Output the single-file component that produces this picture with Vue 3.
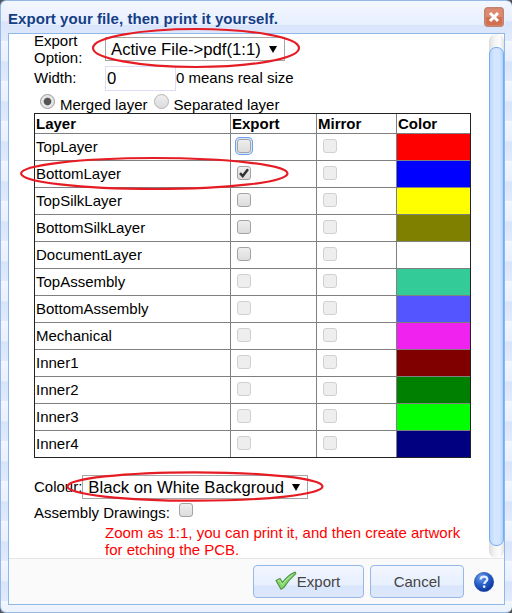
<script setup>
const layers = [
  { name: 'TopLayer', color: '#ff0000', enabled: true, focused: true },
  { name: 'BottomLayer', color: '#0000ff', enabled: true, checked: true },
  { name: 'TopSilkLayer', color: '#ffff00', enabled: true },
  { name: 'BottomSilkLayer', color: '#808000', enabled: true },
  { name: 'DocumentLayer', color: '#ffffff', enabled: true },
  { name: 'TopAssembly', color: '#33cc99' },
  { name: 'BottomAssembly', color: '#5555ff' },
  { name: 'Mechanical', color: '#f022f0' },
  { name: 'Inner1', color: '#800000' },
  { name: 'Inner2', color: '#008000' },
  { name: 'Inner3', color: '#00ff00' },
  { name: 'Inner4', color: '#000080' },
]
</script>

<template>
  <div class="backdrop">
    <div class="window">
      <header class="title-bar">
        <span class="title">Export your file, then print it yourself.</span>
        <span class="close">
          <svg width="20" height="20" viewBox="0 0 20 20">
            <rect x="0.7" y="0.7" width="18.6" height="18.6" rx="3" fill="#dc8a70" stroke="#c08271" stroke-width="1.4" />
            <path d="M2 10h16v6q0 2-2 2H4q-2 0-2-2z" fill="#d07050" />
            <path d="M6 6l8 8M14 6l-8 8" stroke="#fff" stroke-width="3" />
          </svg>
        </span>
      </header>
      <div class="panel">
        <div class="body">
          <div class="form">
            <div class="row option">
              <label class="lbl">Export<br />Option:</label>
              <div class="select file"><span>Active File-&gt;pdf(1:1)</span><i class="arrow"></i></div>
            </div>
            <div class="row width">
              <label class="lbl">Width:</label>
              <div class="input">0</div>
              <span>0 means real size</span>
            </div>
            <div class="row radios">
              <i class="radio on"></i><span class="merged">Merged layer</span>
              <i class="radio"></i><span>Separated layer</span>
            </div>
            <div class="table">
              <div class="tr head">
                <div class="td">Layer</div>
                <div class="td">Export</div>
                <div class="td">Mirror</div>
                <div class="td">Color</div>
              </div>
              <div v-for="l in layers" :key="l.name" class="tr">
                <div class="td">{{ l.name }}</div>
                <div class="td">
                  <i class="check" :class="{ off: !l.enabled, focused: l.focused }">
                    <svg v-if="l.checked" width="12" height="12" viewBox="0 0 12 12">
                      <path d="M2 6.2l2.7 2.9L10 2.3" fill="none" stroke="#333" stroke-width="2.5" />
                    </svg>
                  </i>
                </div>
                <div class="td"><i class="check off"></i></div>
                <div class="td" :style="{ background: l.color }"></div>
              </div>
            </div>
            <div class="row colour">
              <label>Colour:</label>
              <div class="select bg"><span>Black on White Backgroud</span><i class="arrow"></i></div>
            </div>
            <div class="row assembly">
              <label>Assembly Drawings:</label><i class="check"></i>
            </div>
            <p class="note">Zoom as 1:1, you can print it, and then create artwork<br />for etching the PCB.</p>
          </div>
          <div class="track"><div class="thumb"></div></div>
        </div>
        <footer class="footer">
          <div class="btn export">
            <svg width="22" height="20" viewBox="0 0 22 20">
              <path d="M1 9.500l4-2 2.500 4Q12.500 4.500 20 1l.8 1.600Q13.500 9 8.800 16.600L6 18.200z" fill="#82d96b" stroke="#55944c" stroke-width="1.200" stroke-linejoin="round" />
              <path d="M2.800 10l1.700-.8 2.700 4.300Q12 7.200 17.500 3.700" fill="none" stroke="#b3f09c" stroke-width="1" />
            </svg>
            <span>Export</span>
          </div>
          <div class="btn cancel">Cancel</div>
          <svg class="help" width="20" height="20" viewBox="0 0 20 20">
            <defs>
              <radialGradient id="orb" cx=".35" cy=".25" r=".8">
                <stop offset="0" stop-color="#6f9eec" />
                <stop offset=".5" stop-color="#2860ca" />
                <stop offset="1" stop-color="#0b3299" />
              </radialGradient>
            </defs>
            <circle cx="10" cy="10" r="9.6" fill="url(#orb)" stroke="#1946a6" stroke-width=".7" />
            <path d="M6.600 7.500Q6.700 4.600 10 4.600q3.300 0 3.300 2.700c0 2.100-3 2.100-3 4.800" fill="none" stroke="#e6efff" stroke-width="2.200" />
            <circle cx="10.200" cy="14.700" r="1.350" fill="#e6efff" />
          </svg>
        </footer>
      </div>
      <svg class="marks" width="512" height="613" viewBox="0 0 512 613">
        <g fill="none" stroke="#e61c24" stroke-width="2.200">
          <ellipse cx="196" cy="48" rx="103" ry="19" />
          <ellipse cx="154.300" cy="173.500" rx="133.200" ry="15.500" />
          <ellipse cx="195" cy="486.500" rx="127.500" ry="14.200" />
        </g>
      </svg>
    </div>
  </div>
</template>

<style>
body { margin: 0; }
</style>

<style scoped>
* { box-sizing: border-box; }
.backdrop { width: 512px; height: 613px; background: #555; overflow: hidden; font: 15px/17px "Liberation Sans", Arial, sans-serif; color: #000; white-space: nowrap; }
.window {
  position: relative; width: 512px; height: 613px; padding: 0 0 0 7px;
  border: 1px solid #95b8e7; border-right: 0; border-radius: 6px;
  background: repeating-linear-gradient(#f1f6ff 0, #e8effe 20px, #d8e4fb 21px, #e2ebfd 40px);
}
.title-bar { display: flex; justify-content: space-between; width: 497px; height: 32px; background: linear-gradient(#f3f7ff, #e7effe 75%, #d9e5fb 75%, #dce7fc); }
.title { padding-top: 9px; font-weight: bold; color: #153e86; letter-spacing: 0.060px; }
.close { height: 20px; margin: 6px 1px 0 0; }
.close svg { display: block; }
.panel { width: 497px; height: 572px; border: 1px solid #8fb8ea; background: #fff; }
.body { display: flex; justify-content: space-between; height: 524px; }
.form { padding-left: 25px; width: 470px; }
.row { display: flex; }
.lbl { width: 71px; }
.option { height: 32px; }
.option .lbl { margin-top: -2px; }
.select { display: flex; align-items: center; justify-content: space-between; height: 24px; border: 1px solid #a6a6a6; padding: 0 7px 0 5px; font-size: 16.700px; }
.file { width: 180px; margin-top: 3px; }
.bg { width: 226px; }
.arrow { border: 4px solid transparent; border-top: 7px solid #000; border-bottom: 0; }
.width { height: 25px; align-items: center; }
.width .lbl, .width span { margin-top: -2px; }
.input { width: 71px; height: 25px; border: 1px solid #dcdcfa; padding: 3px 0 0 1px; font-size: 16.700px; }
.radios { height: 22px; align-items: center; padding: 4px 0 0 6px; }
.radio { width: 15px; height: 15px; margin: -5px 5px 0 0; border: 1px solid #b4b4b4; border-radius: 50%; background: linear-gradient(#eee, #dcdcdc); }
.radio.on { border-color: #999; background: radial-gradient(circle, #555 0 3.300px, #e6e6e6 4.300px); }
.merged { margin-right: 6px; }
.table { width: 437px; border: 1px solid #222; }
.tr { display: grid; grid-template-columns: 196px 86px 80px 73px; height: 27px; border-bottom: 1px solid #808080; }
.tr:last-child { height: 26px; border-bottom: 0; }
.td { padding: 4px 0 0 1px; border-right: 1px solid #808080; }
.td:last-child { border-right: 0; }
.head { height: 20px; font-weight: bold; }
.head .td { padding-top: 1px; }
.check { display: block; width: 14px; height: 14px; margin: 1px 0 0 5px; border: 1px solid #a3a3a3; border-radius: 3px; background: linear-gradient(#eee, #dcdcdc); }
.check svg { display: block; }
.check.off { border-color: #d0d0d0; background: #eee; }
.check.focused { box-shadow: 0 0 0 1px #d8e6fc, 0 0 0 2px #6ba0f0; }
.colour { height: 24px; margin-top: 17px; align-items: center; }
.colour label { margin-top: -1px; }
.assembly { height: 25px; padding-top: 5px; }
.assembly .check { width: 14px; height: 14px; margin: -1px 0 0 9px; }
.note { margin: 0 0 0 71px; color: #f00; }
.track { width: 15px; height: 524px; border-radius: 7px; background: linear-gradient(90deg, #ddd, #f3f3f3 35%, #fcfcfc 70%, #e4e4e4); padding-top: 13px; }
.thumb { height: 499px; border: 1px solid #70adf5; border-radius: 7px; background: linear-gradient(90deg, #bcd8fd, #d5e6ff 35%, #d2e5ff 75%, #b1d2fc); }
.footer { display: flex; height: 46px; padding: 6px 10px 0 0; justify-content: flex-end; border-top: 1px solid #e6e6e6; background: #fafafa; }
.btn { display: flex; align-items: center; justify-content: center; height: 33px; border: 1px solid #95b8e7; border-radius: 4px; background: linear-gradient(#f2f6ff, #e7effe 60%, #d9e5fb 65%, #dde8fc); color: #444; padding-bottom: 1px; }
.export { width: 111px; margin-right: 6px; padding-right: 2px; }
.cancel { width: 94px; margin-right: 10px; }
.help { margin-top: 7px; }
.marks { position: absolute; left: -1px; top: -1px; }
</style>
